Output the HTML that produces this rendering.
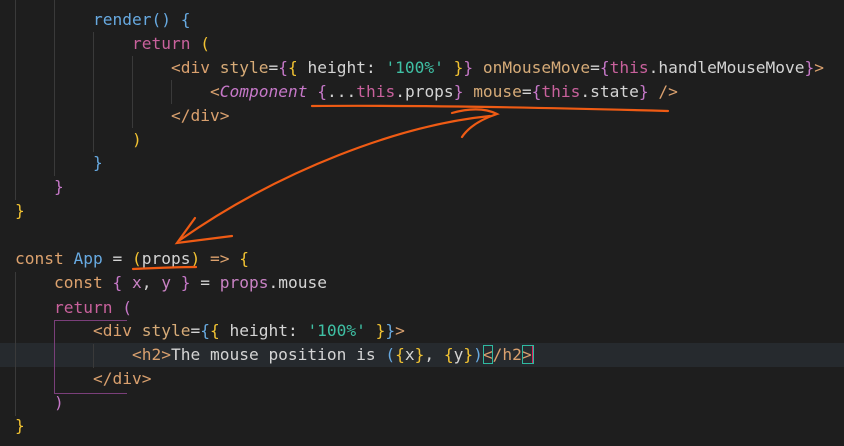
<!DOCTYPE html>
<html><head><style>
html,body{margin:0;padding:0;background:#1e1e1e;width:844px;height:446px;overflow:hidden}
.l{position:absolute;left:15px;height:24px;line-height:24px;font-family:"DejaVu Sans Mono","Liberation Mono",monospace;font-size:16.2px;color:#d4d4d4;white-space:pre}
.k{color:#dda26e}.b{color:#67a9e0}.p{color:#c8619c}.y{color:#f1c232}.m{color:#c678c8}
.t{color:#d9a06e}.s{color:#3fc1a5}.a{color:#d6ab78}.pr{color:#c982c4}.i{font-style:italic;color:#c678c8}
.g{position:absolute;width:1px;background:#3a3a3a}
</style></head><body>
<div style="position:absolute;left:0;top:343px;width:844px;height:24px;background:#262a2e"></div>
<div class="g" style="left:15px;top:0;height:200px"></div>
<div class="g" style="left:54px;top:0;height:176px"></div>
<div class="g" style="left:93px;top:32px;height:120px"></div>
<div class="g" style="left:132px;top:56px;height:72px"></div>
<div class="g" style="left:171px;top:80px;height:24px"></div>
<div class="g" style="left:15px;top:272px;height:144px"></div>
<div style="position:absolute;left:54px;top:320px;width:72px;height:72px;border-left:1px solid #7a3f7a;border-top:1px solid #7a3f7a;border-bottom:1px solid #7a3f7a"></div>
<div class="g" style="left:93px;top:344px;height:24px"></div>
<div class="l" style="top:8px;left:93px"><span class="b">render</span><span class="b">() {</span></div>
<div class="l" style="top:32px;left:132px"><span class="p">return</span> <span class="y">(</span></div>
<div class="l" style="top:56px;left:171px"><span class="t">&lt;div</span> <span class="a">style</span>=<span class="m">{</span><span class="y">{</span> height: <span class="s">'100%'</span> <span class="y">}</span><span class="m">}</span> <span class="a">onMouseMove</span>=<span class="m">{</span><span class="p">this</span>.handleMouseMove<span class="m">}</span><span class="t">&gt;</span></div>
<div class="l" style="top:80px;left:210px"><span class="t">&lt;</span><span class="i">Component</span> <span class="m">{</span>...<span class="p">this</span>.props<span class="m">}</span> <span class="a">mouse</span>=<span class="m">{</span><span class="p">this</span>.state<span class="m">}</span> <span class="t">/&gt;</span></div>
<div class="l" style="top:104px;left:171px"><span class="t">&lt;/div&gt;</span></div>
<div class="l" style="top:128px;left:132px"><span class="y">)</span></div>
<div class="l" style="top:151px;left:93px"><span class="b">}</span></div>
<div class="l" style="top:175px;left:54px"><span class="m">}</span></div>
<div class="l" style="top:199px;left:15px"><span class="y">}</span></div>
<div class="l" style="top:247px"><span class="k">const</span> <span class="b">App</span> = <span class="y">(</span>props<span class="y">)</span> <span class="k">=&gt;</span> <span class="y">{</span></div>
<div class="l" style="top:271px;left:54px"><span class="k">const</span> <span class="m">{</span> <span class="pr">x</span>, <span class="pr">y</span> <span class="m">}</span> = <span class="pr">props</span>.mouse</div>
<div class="l" style="top:296px;left:54px"><span class="p">return</span> <span class="m">(</span></div>
<div class="l" style="top:319px;left:93px"><span class="t">&lt;div</span> <span class="a">style</span>=<span class="b">{</span><span class="y">{</span> height: <span class="s">'100%'</span> <span class="y">}</span><span class="b">}</span><span class="t">&gt;</span></div>
<div class="l" style="top:343px;left:132px"><span class="t">&lt;h2&gt;</span>The mouse position is <span class="b">(</span><span class="y">{</span>x<span class="y">}</span>, <span class="y">{</span>y<span class="y">}</span><span class="b">)</span><span class="t" style="outline:1px solid #2fb9a0;outline-offset:-1px">&lt;</span><span class="t">/h2</span><span class="t" style="outline:1px solid #2fb9a0;outline-offset:-1px;border-right:2px solid #e0245e">&gt;</span></div>
<div class="l" style="top:367px;left:93px"><span class="t">&lt;/div&gt;</span></div>
<div class="l" style="top:391px;left:54px"><span class="m">)</span></div>
<div class="l" style="top:414px;left:15px"><span class="y">}</span></div>
<svg width="844" height="446" style="position:absolute;left:0;top:0" fill="none" stroke="#ef5b14" stroke-width="2.2" stroke-linecap="round">
<path d="M312 106 C420 105 560 108 668 111"/>
<path d="M452 113 C470 108 485 108 497 114 C485 118 470 125 462 137"/>
<path d="M490 116 C400 125 280 170 180 240"/>
<path d="M195 218 L177 243 L232 236"/>
<path d="M133 269 C155 268 178 267 196 267"/>
</svg>
</body></html>
